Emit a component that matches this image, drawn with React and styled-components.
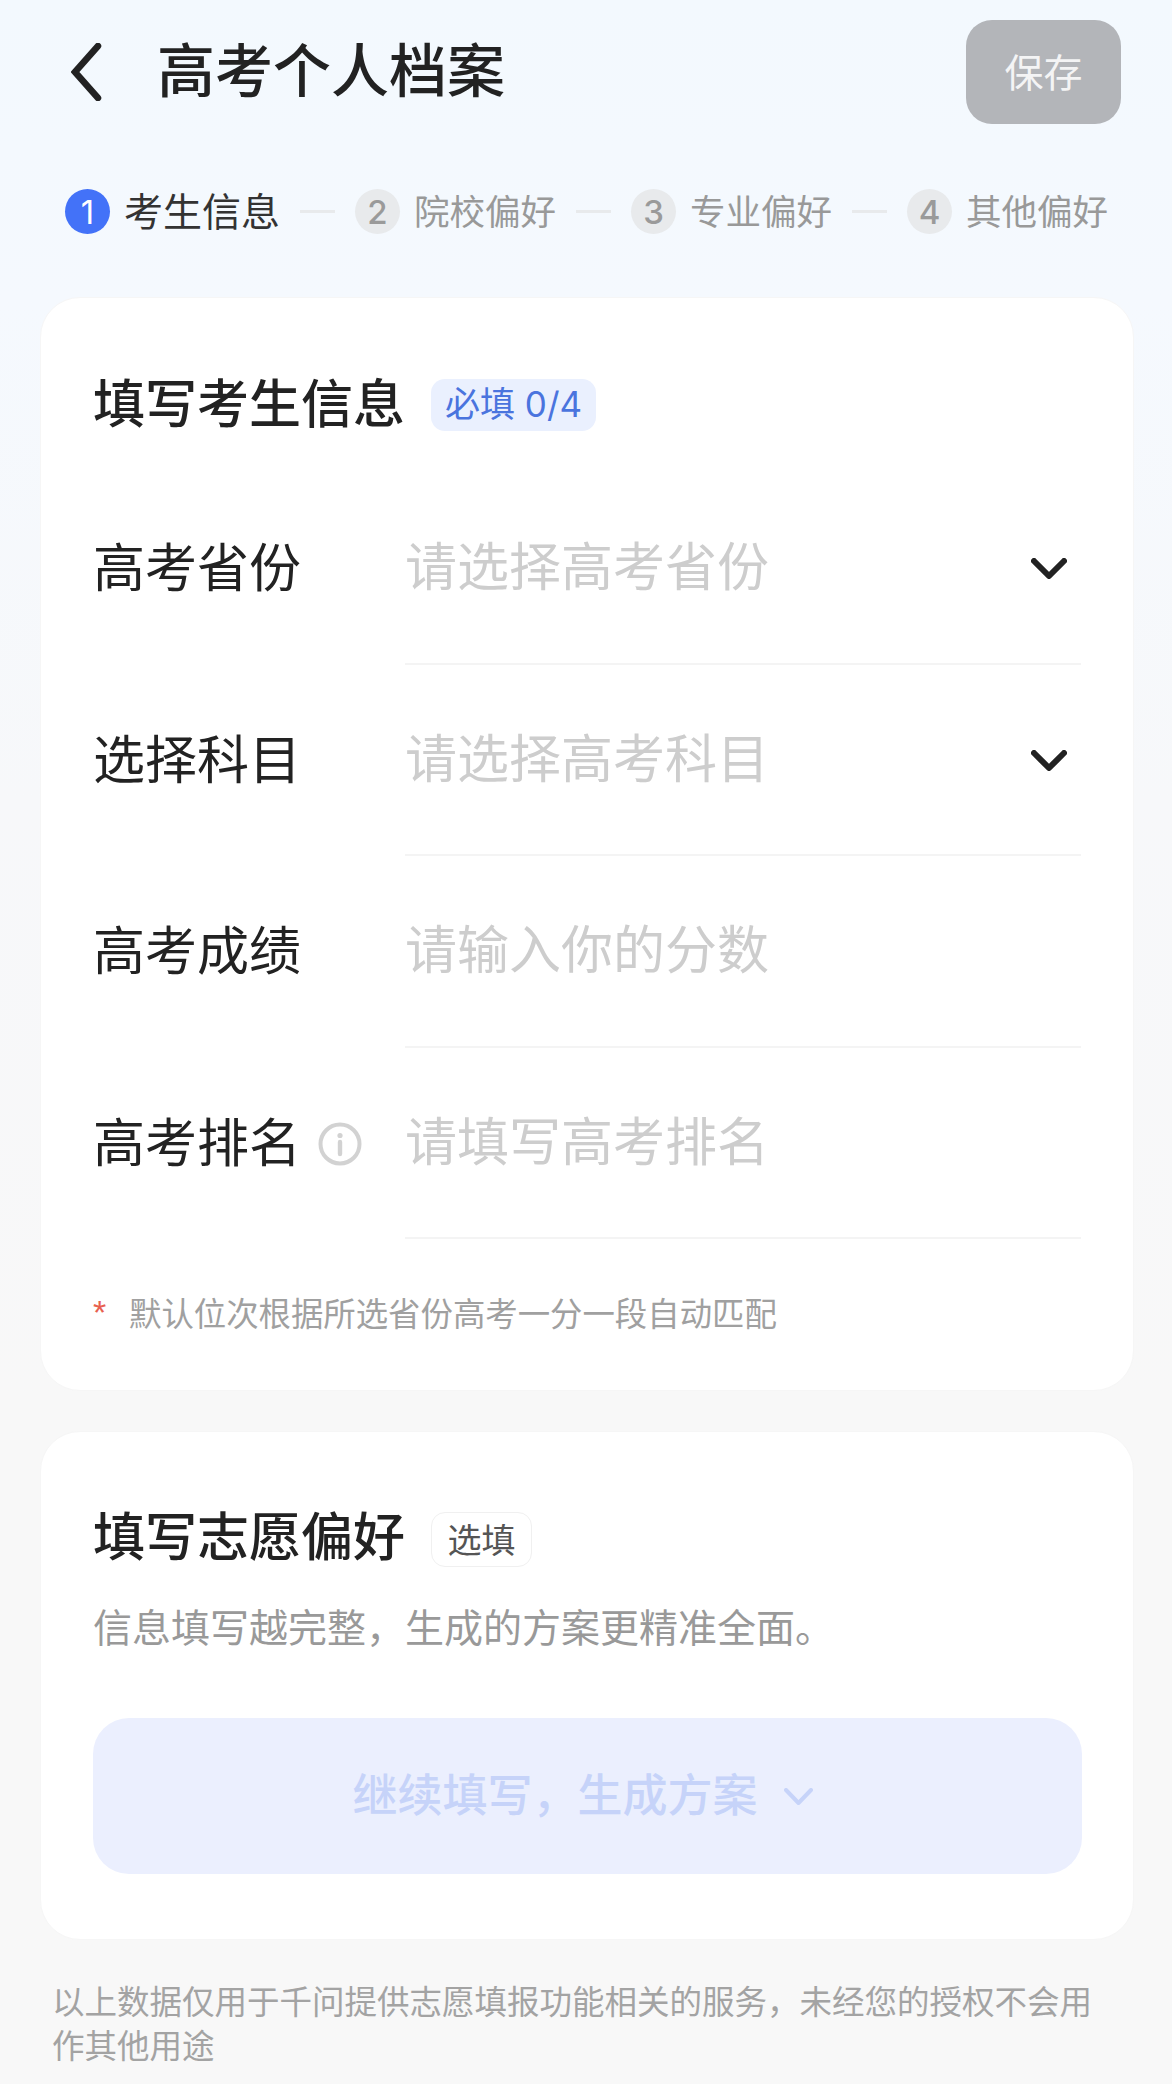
import React from "react";
import styled, { createGlobalStyle } from "styled-components";

const Global = createGlobalStyle`
  html, body { margin: 0; padding: 0; height: 2084px; overflow: hidden; }
  body { font-family: "Noto Sans CJK SC", "Noto Sans", sans-serif; }
  * { box-sizing: border-box; }
`;

const Page = styled.div`
  width: 1172px;
  height: 2084px;
  overflow: hidden;
  background: linear-gradient(180deg, #f3f9fe 0, #f5f9fe 300px, #f7f8fa 800px, #f8f8f8 1400px);
`;

const Header = styled.header`
  height: 140px;
  padding: 20px 51px 0 71px;
  display: flex;
  align-items: flex-start;
`;

const BackButton = styled.div`
  width: 31px;
  height: 58px;
  margin-top: 23px;
  flex: none;
`;

const Title = styled.h1`
  margin: 0 0 0 55px;
  flex: 1;
  font-size: 58px;
  line-height: 94px;
  font-weight: 500;
  color: #222;
`;

const SaveButton = styled.div`
  width: 155px;
  height: 104px;
  padding-bottom: 5px;
  border-radius: 26px;
  background: #b3b5b9;
  color: #f4f4f5;
  font-size: 39px;
  display: flex;
  align-items: center;
  justify-content: center;
`;

const Steps = styled.nav`
  height: 157px;
  padding: 49px 0 0 65px;
  display: flex;
  align-items: flex-start;
`;

const Step = styled.div`
  display: flex;
  align-items: center;
  height: 45px;
  gap: 14px;
  flex: none;
`;

const StepDot = styled.span`
  width: 45px;
  height: 45px;
  border-radius: 50%;
  flex: none;
  display: flex;
  align-items: center;
  justify-content: center;
  font-family: Inter, sans-serif;
  font-size: 33px;
  font-weight: ${(p) => (p.$active ? 400 : 500)};
  background: ${(p) => (p.$active ? "#4372f8" : "#e8eaec")};
  color: ${(p) => (p.$active ? "#fff" : "#9a9a9a")};
`;

const StepText = styled.span`
  font-size: ${(p) => (p.$active ? "39px" : "35.5px")};
  line-height: 45px;
  padding-bottom: 5px;
  white-space: nowrap;
  color: ${(p) => (p.$active ? "#333" : "#999")};
`;

const StepLine = styled.span`
  width: 35px;
  height: 3px;
  margin: 21px 20px 0;
  background: #e8eaec;
  flex: none;
`;

const Card = styled.section`
  height: ${(p) => p.$height}px;
  margin: 0 38px ${(p) => p.$gap}px 40px;
  padding: 76px 0 0 52px;
  background: #fff;
  border-radius: 40px;
  border: 1px solid #f6f6f6;
`;

const CardTitleRow = styled.div`
  display: flex;
  align-items: center;
  height: 60px;
  gap: 26px;
`;

const CardTitle = styled.h2`
  margin: 0;
  padding-bottom: ${(p) => p.$lift}px;
  font-size: 52px;
  line-height: 60px;
  font-weight: 500;
  color: #222;
  white-space: nowrap;
`;

const RequiredTag = styled.span`
  height: 52px;
  margin-top: 2px;
  padding: 0 14px;
  border-radius: 14px;
  background: #eaf0fe;
  color: #4a74de;
  font-family: Inter, "Noto Sans CJK SC", sans-serif;
  font-size: 35px;
  line-height: 50px;
  white-space: nowrap;
`;

const OptionalTag = styled.span`
  height: 55px;
  width: 101px;
  margin-top: 2px;
  border: 1px solid #f0f0f0;
  border-radius: 14px;
  color: #555;
  font-size: 34px;
  line-height: 51px;
  text-align: center;
`;

const Rows = styled.div`
  margin-top: 39px;
`;

const Row = styled.div`
  display: grid;
  grid-template-columns: 312px 676px;
  height: 191.6px;
`;

const Label = styled.div`
  display: flex;
  align-items: center;
  gap: 17px;
  padding-bottom: 8px;
  font-size: 52px;
  color: #222;
  white-space: nowrap;
`;

const Field = styled.div`
  display: flex;
  align-items: center;
  justify-content: space-between;
  padding: 0 14px 8px 0;
  border-bottom: 2px solid #f4f4f4;
`;

const Placeholder = styled.span`
  font-size: 52px;
  color: #cdcdcd;
  white-space: nowrap;
`;

const DropIcon = styled.svg`
  flex: none;
  margin-top: ${(p) => p.$nudge}px;
`;

const InfoIcon = styled.svg`
  flex: none;
  margin-top: 9px;
`;

const Hint = styled.p`
  margin: 50px 0 0;
  height: 46px;
  display: flex;
  align-items: center;
  font-size: 32.4px;
  line-height: 46px;
  color: #a0a0a0;
  white-space: nowrap;
`;

const Star = styled.span`
  width: 36px;
  flex: none;
  color: #e8604f;
  font-family: "Liberation Sans", sans-serif;
  font-size: 34px;
`;

const Subtitle = styled.p`
  margin: 27px 0 0;
  height: 60px;
  font-size: 39px;
  line-height: 60px;
  color: #999;
  white-space: nowrap;
`;

const ActionButton = styled.div`
  margin-top: 63px;
  width: 989px;
  height: 156px;
  padding-right: 10px;
  border-radius: 36px;
  background: #ebeffe;
  color: #c6d3f9;
  font-size: 45px;
  font-weight: 500;
  display: flex;
  align-items: center;
  justify-content: center;
  gap: 26px;
`;

const ActionText = styled.span`
  padding-bottom: 8px;
`;

const Footer = styled.p`
  margin: 38px 0 0;
  padding: 0 70px 0 52px;
  font-size: 32.5px;
  line-height: 44px;
  color: #a3a3a3;
`;

const Back = () => (
  <BackButton>
    <svg width="31" height="58" viewBox="0 0 31 58" fill="none">
      <path d="M27 3L4 29L27 55" stroke="#222" strokeWidth="6.5" strokeLinecap="round" strokeLinejoin="miter" />
    </svg>
  </BackButton>
);

const Chevron = ({ w = 36, h = 21, color = "#222", sw = 6, nudge = 0 }) => (
  <DropIcon $nudge={nudge} width={w} height={h} viewBox={`0 0 ${w} ${h}`} fill="none">
    <path
      d={`M${sw / 2} ${sw / 2}L${w / 2} ${h - sw / 2}L${w - sw / 2} ${sw / 2}`}
      stroke={color}
      strokeWidth={sw}
      strokeLinecap="round"
      strokeLinejoin="round"
    />
  </DropIcon>
);

const Info = () => (
  <InfoIcon width="44" height="44" viewBox="0 0 44 44" fill="none">
    <circle cx="22" cy="22" r="19.5" stroke="#d2d2d2" strokeWidth="4" />
    <circle cx="22" cy="13.5" r="2.6" fill="#d2d2d2" />
    <path d="M22 20V32" stroke="#d2d2d2" strokeWidth="4.4" strokeLinecap="round" />
  </InfoIcon>
);

const steps = ["考生信息", "院校偏好", "专业偏好", "其他偏好"];

const rows = [
  { label: "高考省份", placeholder: "请选择高考省份", select: true },
  { label: "选择科目", placeholder: "请选择高考科目", select: true },
  { label: "高考成绩", placeholder: "请输入你的分数" },
  { label: "高考排名", placeholder: "请填写高考排名", info: true },
];

export default function App() {
  return (
    <Page>
      <Global />
      <Header>
        <Back />
        <Title>高考个人档案</Title>
        <SaveButton>保存</SaveButton>
      </Header>
      <Steps>
        {steps.map((s, i) => (
          <React.Fragment key={s}>
            {i > 0 && <StepLine />}
            <Step>
              <StepDot $active={i === 0}>{i + 1}</StepDot>
              <StepText $active={i === 0}>{s}</StepText>
            </Step>
          </React.Fragment>
        ))}
      </Steps>
      <Card $height={1094} $gap={40}>
        <CardTitleRow>
          <CardTitle $lift={6}>填写考生信息</CardTitle>
          <RequiredTag>必填 0/4</RequiredTag>
        </CardTitleRow>
        <Rows>
          {rows.map((r) => (
            <Row key={r.label}>
              <Label>
                {r.label}
                {r.info && <Info />}
              </Label>
              <Field>
                <Placeholder>{r.placeholder}</Placeholder>
                {r.select && <Chevron nudge={10} />}
              </Field>
            </Row>
          ))}
        </Rows>
        <Hint>
          <Star>*</Star>
          默认位次根据所选省份高考一分一段自动匹配
        </Hint>
      </Card>
      <Card $height={509} $gap={0}>
        <CardTitleRow>
          <CardTitle $lift={8}>填写志愿偏好</CardTitle>
          <OptionalTag>选填</OptionalTag>
        </CardTitleRow>
        <Subtitle>信息填写越完整，生成的方案更精准全面。</Subtitle>
        <ActionButton>
          <ActionText>继续填写，生成方案</ActionText>
          <Chevron w={29} h={17} color="#c6d3f9" sw={4} />
        </ActionButton>
      </Card>
      <Footer>以上数据仅用于千问提供志愿填报功能相关的服务，未经您的授权不会用作其他用途</Footer>
    </Page>
  );
}
